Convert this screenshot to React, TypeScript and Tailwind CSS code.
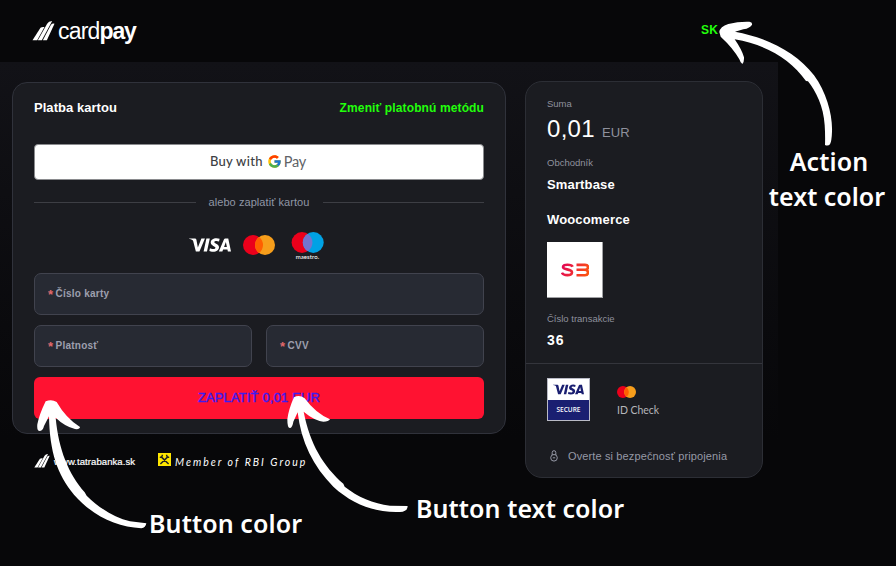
import React from "react";
import { FcGoogle } from "react-icons/fc";
import { SiVisa } from "react-icons/si";

function Slashes({ className }: { className: string }) {
  return (
    <svg viewBox="0 0 66 60" className={className} fill="#fff">
      <path d="M0 58 L24 20 Q28 17 36 18 L14 58Z" />
      <path d="M16 58 L44 8 Q48 1 59 0 L28 58Z" />
      <path d="M31 58 L55 12 Q58 7 66 8 L43 58Z" />
    </svg>
  );
}

function Circles({ className, left, right, mid }: { className: string; left: string; right: string; mid: string }) {
  return (
    <svg viewBox="0 0 64 40" className={className}>
      <circle cx="20" cy="20" r="20" fill={left} />
      <circle cx="44" cy="20" r="20" fill={right} />
      <path d="M32 4 A20 20 0 0 1 32 36 A20 20 0 0 1 32 4Z" fill={mid} />
    </svg>
  );
}

function Field({ label }: { label: string }) {
  return (
    <div className="flex h-[42px] flex-1 items-center rounded-[7px] border border-[#41434e] bg-[#272a33] pb-[2px] pl-[13px] text-[10px] font-bold tracking-[0.25px] text-[#9d9fae]">
      <span className="w-[7.5px] pt-[4px] text-[13px] leading-[12px] text-[#e0686c]">*</span>
      <span>{label}</span>
    </div>
  );
}

function PaymentCard() {
  return (
    <section className="flex h-[352px] w-[494px] flex-col rounded-[15px] border border-[#30323b] bg-[#1b1c21] px-[21px]">
      <div className="mt-[16px] flex h-[17px] items-center justify-between font-bold">
        <h1 className="text-[13px] tracking-[0.04px] text-white">Platba kartou</h1>
        <a className="text-[12px] tracking-[0.12px] text-[#22ff0b]">Zmeniť platobnú metódu</a>
      </div>
      <button className="mt-[28px] flex h-[36px] shrink-0 items-center justify-center rounded-[4px] border border-[#8a8b8e] bg-white pr-[2px] text-[#3c4043]">
        <span className="font-['Lato',sans-serif] text-[13px] font-medium tracking-[0.3px]">Buy with</span>
        <FcGoogle className="-mt-[2px] ml-[4px] size-[15px]" />
        <span className="-mt-[1px] ml-[2px] font-['Lato',sans-serif] text-[14.5px] tracking-[-0.2px] text-[#5f6368]">Pay</span>
      </button>
      <div className="mt-[14px] flex h-[16px] items-center text-[11px] tracking-[0.07px] text-[#9096a5]">
        <span className="h-px flex-1 bg-[#3d3e44]" />
        <span className="mx-[13px]">alebo zaplatiť kartou</span>
        <span className="h-px flex-1 bg-[#3d3e44]" />
      </div>
      <div className="mt-[22px] flex h-[28px] items-start pl-[155px]">
        <SiVisa viewBox="0 8.1 24 7.8" className="mt-[6px] h-[14px] w-[42px] text-white" />
        <Circles className="ml-[12px] mt-[3px] h-[20px] w-[32px]" left="#eb001b" right="#f79e1b" mid="#ff5f00" />
        <div className="ml-[16px] flex flex-col items-center">
          <svg viewBox="0 0 33 22" className="h-[22px] w-[33px]">
            <circle cx="11" cy="10.5" r="10.4" fill="#eb001b" />
            <circle cx="22.3" cy="10.5" r="10.4" fill="#00a2e5" />
            <path d="M16.6 1.7 A10.4 10.4 0 0 1 16.6 19.3 A10.4 10.4 0 0 1 16.6 1.7Z" fill="#7375cf" />
          </svg>
          <span className="font-['Lato',sans-serif] text-[6px] font-medium leading-[5px] tracking-[0.1px] text-white">maestro.</span>
        </div>
      </div>
      <div className="mt-[13px] flex"><Field label="Číslo karty" /></div>
      <div className="mt-[10px] flex gap-[14px]">
        <Field label="Platnosť" />
        <Field label="CVV" />
      </div>
      <button className="mt-[10px] h-[42px] shrink-0 rounded-[6px] bg-[#ff1231] text-[13px] tracking-[0.15px] text-[#3d1cf0] [-webkit-text-stroke:0.4px_#3d1cf0]">
        ZAPLATIŤ 0,01 EUR
      </button>
    </section>
  );
}

function SummaryCard() {
  return (
    <aside className="flex h-[397px] w-[238px] flex-col rounded-[17px] border border-[#2c2e35] bg-[#1b1c21] text-[#8f919d]">
      <div className="flex h-[282px] shrink-0 flex-col border-b border-[#34353c] pl-[21px] text-[9.5px]">
        <p className="mt-[15px] h-[14px] leading-[14px]">Suma</p>
        <p className="mt-[4px] flex h-[28px] items-baseline leading-[28px]">
          <span className="text-[24px] tracking-[0.3px] text-white">0,01</span>
          <span className="ml-[7px] text-[13px] tracking-[0.1px]">EUR</span>
        </p>
        <p className="mt-[13px] h-[14px] leading-[14px]">Obchodník</p>
        <p className="mt-[7px] h-[16px] text-[13px] font-bold leading-[16px] tracking-[0.15px] text-white">Smartbase</p>
        <p className="mt-[19px] h-[16px] text-[13px] font-bold leading-[16px] tracking-[0.15px] text-white">Woocomerce</p>
        <div className="mt-[14px] flex size-[56px] shrink-0 items-center justify-center border-b border-r border-[#a0a1a4] bg-white">
          <svg viewBox="0 0 28 14" className="h-[14px] w-[28px]" fill="none" strokeWidth="2.6">
            <defs>
              <linearGradient id="brand" gradientUnits="userSpaceOnUse" x1="0" y1="0" x2="28" y2="14">
                <stop stopColor="#e0005a" />
                <stop offset="1" stopColor="#ff5a0a" />
              </linearGradient>
            </defs>
            <path stroke="url(#brand)" d="M11.6 3.7 C10.6 1.2 2 .9 2 4 C2 7.2 11 5.5 11 9.4 C11 13.3 2 12.8 1 9.6" />
            <path stroke="url(#brand)" d="M15.5 1.9 H24 Q27 1.9 27 4 Q27 6.8 24 6.8 H15.5 M23 6.8 Q27 6.8 27 9.5 Q27 12.2 24 12.2 H15.5" />
          </svg>
        </div>
        <p className="mt-[14px] h-[14px] leading-[14px]">Číslo transakcie</p>
        <p className="mt-[6px] h-[16px] text-[14px] font-bold leading-[16px] tracking-[0.9px] text-white">36</p>
      </div>
      <div className="mt-[14px] flex h-[43px] shrink-0 pl-[21px]">
        <div className="flex h-[43px] w-[43px] flex-col items-center border border-[#b9bac6] bg-white">
          <SiVisa viewBox="0 8.1 24 7.8" className="mt-[5px] h-[11px] w-[31px] shrink-0 text-[#1a1f71]" />
          <div className="mt-[5px] flex w-[41px] flex-1 items-center justify-center bg-[#1a1f71] font-['Open_Sans',sans-serif] text-[6.5px] font-semibold text-white">SECURE</div>
        </div>
        <div className="ml-[27px] flex flex-col items-start">
          <Circles className="mt-[8px] h-[12px] w-[19px]" left="#eb001b" right="#f79e1b" mid="#ff5f00" />
          <span className="mt-[5px] font-['Lato',sans-serif] text-[10.5px] leading-[14px] tracking-[-0.05px] text-[#b5b6ba]">ID Check</span>
        </div>
      </div>
      <div className="mt-[27px] flex h-[16px] items-center pl-[24px] text-[11px] tracking-[0.13px] text-[#9699a6]">
        <svg viewBox="0 0 8 12" className="h-[12px] w-[8px]" fill="none" stroke="currentColor" strokeWidth="1">
          <path d="M2.2 5 V2.4 Q2.2.7 4 .7 Q5.8.7 5.8 2.4 V5" />
          <circle cx="4" cy="7.8" r="3.3" />
          <path d="M2.8 7.8 H5.2" />
        </svg>
        <span className="ml-[10px]">Overte si bezpečnosť pripojenia</span>
      </div>
    </aside>
  );
}

function Annotations() {
  return (
    <div className="pointer-events-none absolute inset-0 font-['Noto_Sans',sans-serif] text-[25px] font-semibold leading-[35px] text-white">
      <svg className="absolute inset-0 h-full w-full" viewBox="0 0 896 566" fill="#fff">
        <g transform="translate(680 0) scale(.33333)">
          <path d="M118 96 Q120 80 145 72 Q175 64 208 65 Q218 67 216 74 Q211 84 190 88 L165 95 C260 112 350 158 402 226 C440 278 458 345 456 395 Q455 424 450 433 Q444 439 435 435 Q436 405 434 375 C431 320 408 275 384 244 L378 243 C330 175 260 135 164 118 Q185 148 192 172 Q193 186 187 192 Q182 190 178 178 Q160 145 122 110Z" />
        </g>
        <g transform="translate(0 370) scale(.33333)">
          <path d="M137 94 Q118 133 112 163 Q110 184 120 183 Q129 181 132 168 L147 139 C149 245 172 315 222 374 C280 440 350 470 424 475 Q437 474 439 460 L390 454 C345 443 298 415 260 377 L254 367 C205 310 176 240 167 143 Q194 169 225 177 Q239 179 240 171 Q198 145 170 96 Q155 87 137 94Z" />
        </g>
        <g transform="translate(270 370) scale(.33333)">
          <path d="M72 82 Q56 117 52 148 Q52 177 61 174 Q68 170 70 155 L83 127 C93 215 130 290 190 350 C250 405 320 429 390 426 Q413 425 413 408 L360 407 C310 401 262 380 224 350 L220 341 C160 288 120 223 101 125 Q132 151 160 155 Q176 155 180 148 Q137 130 104 85 Q88 73 72 82Z" />
        </g>
      </svg>
      <p className="absolute left-[752px] top-[144px] w-[154px] whitespace-nowrap text-center tracking-[0.1px]">
        Action
      </p>
      <p className="absolute left-[750px] top-[179px] w-[154px] whitespace-nowrap text-center">text color</p>
      <p className="absolute left-[149px] top-[506px] whitespace-nowrap tracking-[0.1px]">Button color</p>
      <p className="absolute left-[416px] top-[491px] whitespace-nowrap tracking-[0.08px]">Button text color</p>
    </div>
  );
}

export default function App() {
  return (
    <div className="relative h-[566px] w-[896px] overflow-hidden bg-[#070709] font-['Liberation_Sans',Arial,sans-serif]">
      <header className="flex h-[62px] items-center pl-[32px] text-white">
        <Slashes className="h-[20px] w-[23px]" />
        <p className="ml-[3px] w-[80px] whitespace-nowrap text-[23px] leading-[24px]">
          <span className="tracking-[-0.8px]">card</span>
          <span className="font-bold tracking-[-1.2px]">pay</span>
        </p>
        <span className="ml-[563px] pb-[3px] text-[12px] font-bold tracking-[0.3px] text-[#22ff0b]">SK</span>
      </header>
      <main className="flex h-[504px] w-[778px] items-start bg-linear-to-b from-[#121217] from-0% to-[#070709] to-75% pl-[12px]">
        <div className="mt-[20px] flex flex-col">
          <PaymentCard />
          <footer className="mt-[17px] flex h-[20px] items-center pl-[22px] text-white">
            <Slashes className="-mt-[1px] h-[14px] w-[16px]" />
            <span className="ml-[4px] mt-[3px] w-[103px] whitespace-nowrap text-[9.5px] tracking-[0.08px] [-webkit-text-stroke:0.2px_white]">www.tatrabanka.sk</span>
            <svg viewBox="0 0 13 13" className="-mt-[3px] ml-[1px] size-[13px]">
              <rect width="13" height="13" fill="#fee600" />
              <path d="M3 3.6 L10.6 11 M10 3.6 L2.4 11 M1.8 4.2 Q4.2 4.6 4.4 1.8 M11.2 4.2 Q8.8 4.6 8.6 1.8" fill="none" stroke="#222" strokeWidth="1.5" />
            </svg>
            <span className="ml-[4px] mt-[3px] whitespace-nowrap font-['Lato',sans-serif] text-[10.5px] italic tracking-[2px]">Member of RBI Group</span>
          </footer>
        </div>
        <div className="ml-[19px] mt-[19px]">
          <SummaryCard />
        </div>
      </main>
      <Annotations />
    </div>
  );
}
